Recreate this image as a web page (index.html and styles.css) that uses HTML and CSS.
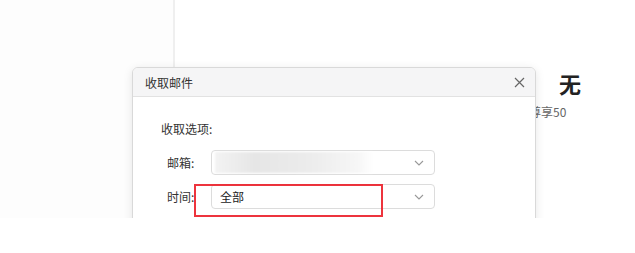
FILE: index.html
```html
<!DOCTYPE html>
<html lang="zh">
<head>
<meta charset="utf-8">
<link rel="stylesheet" href="styles.css">
</head>
<body>
<div class="shot">
  <div class="app">
    <aside class="sidebar"></aside>
    <main class="main">
      <div class="promo">
        <div class="promo-title">无</div>
        <div class="promo-sub">尊享50</div>
      </div>
    </main>
  </div>
  <div class="dialog">
    <div class="dlg-head">
      <span class="dlg-title">收取邮件</span>
      <svg class="dlg-close" width="11" height="11" viewBox="0 0 11 11"><path d="M1 1L10 10M10 1L1 10" stroke="#666" stroke-width="1.2" fill="none"/></svg>
    </div>
    <div class="dlg-body">
      <div class="section">收取选项:</div>
      <div class="row">
        <span class="label">邮箱:</span>
        <div class="select">
          <span class="blur"></span>
          <svg class="chev" width="10" height="6" viewBox="0 0 10 6"><path d="M1 1L5 5L9 1" stroke="#999" stroke-width="1.1" fill="none"/></svg>
        </div>
      </div>
      <div class="row">
        <span class="label">时间:</span>
        <div class="select">
          <span class="value">全部</span>
          <svg class="chev" width="10" height="6" viewBox="0 0 10 6"><path d="M1 1L5 5L9 1" stroke="#999" stroke-width="1.1" fill="none"/></svg>
        </div>
      </div>
    </div>
  </div>
  <div class="highlight"></div>
</div>
</body>
</html>
```
FILE: styles.css
```css
html, body {
  margin: 0;
  padding: 0;
  background: #fff;
  font-family: "Noto Sans CJK SC", "Noto Sans", sans-serif;
}
.shot {
  position: relative;
  width: 635px;
  height: 218px;
  overflow: hidden;
  background: #fff;
}
.app {
  display: flex;
  height: 100%;
}
.sidebar {
  width: 173px;
  flex: none;
  background: #fdfdfd;
  border-right: 2px solid #efefef;
}
.main {
  flex: 1;
  position: relative;
}
.promo {
  position: absolute;
  left: 384px;
  top: 68px;
}
.promo-title {
  font-size: 22px;
  font-weight: 700;
  color: #222;
  line-height: 30px;
}
.promo-sub {
  margin-left: -30px;
  font-size: 12px;
  color: #666;
  line-height: 16px;
  margin-top: 6px;
}
.dialog {
  position: absolute;
  left: 132px;
  top: 67px;
  width: 402px;
  height: 220px;
  background: #fff;
  border: 1px solid #d9d9d9;
  border-radius: 6px;
  box-shadow: 0 2px 10px rgba(0,0,0,0.10);
  overflow: hidden;
}
.dlg-head {
  height: 28px;
  background: #f5f5f6;
  border-bottom: 1px solid #e2e2e2;
  display: flex;
  align-items: center;
  justify-content: space-between;
  padding: 0 10px 0 12px;
}
.dlg-title {
  font-size: 12px;
  color: #333;
}
.dlg-close {
  display: block;
}
.dlg-body {
  padding: 23px 0 0 28px;
}
.section {
  font-size: 12px;
  color: #333;
  line-height: 18px;
  margin-bottom: 12px;
}
.row {
  display: flex;
  align-items: center;
  padding-left: 6px;
  margin-bottom: 9px;
}
.label {
  width: 44px;
  font-size: 12px;
  color: #333;
}
.select {
  width: 209px;
  height: 23px;
  border: 1px solid #dcdcdc;
  border-radius: 4px;
  display: flex;
  align-items: center;
  padding: 0 10px 0 3px;
  box-sizing: content-box;
  justify-content: space-between;
}
.blur {
  width: 158px;
  height: 21px;
  background: linear-gradient(90deg, #f3f3f3 0%, #e6e6e6 25%, #ececec 60%, #f6f6f6 90%, #fff 100%);
  filter: blur(1px);
}
.value {
  font-size: 12px;
  color: #222;
  padding-left: 5px;
}
.chev {
  display: block;
}
.highlight {
  position: absolute;
  left: 194px;
  top: 184px;
  width: 185px;
  height: 29px;
  border: 2px solid rgba(235, 30, 40, 0.9);
}
```
